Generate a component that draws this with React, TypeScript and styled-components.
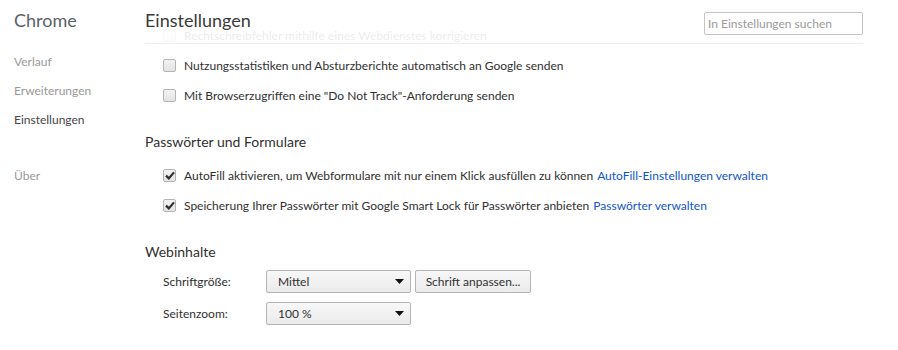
import React from 'react';
import styled, { createGlobalStyle } from 'styled-components';

const GlobalStyle = createGlobalStyle`
  body {
    margin: 0;
    background: #fff;
    font-family: Lato, "Open Sans", sans-serif;
    font-size: 12px;
    color: #303030;
  }
`;

const Page = styled.div`
  display: flex;
  width: 898px;
  height: 350px;
  overflow: hidden;
`;

const Sidebar = styled.nav`
  width: 145px;
  flex-shrink: 0;
  padding-left: 14px;
  box-sizing: border-box;
`;

const Brand = styled.h1`
  margin: 0;
  padding-top: 9px;
  font-size: 18px;
  line-height: 22px;
  font-weight: 400;
  color: #5c6166;
`;

const NavList = styled.ul`
  list-style: none;
  margin: 16px 0 0;
  padding: 0;
`;

const NavItem = styled.li<{ $active?: boolean; $gap?: boolean }>`
  height: 29px;
  line-height: 29px;
  margin-top: ${(p) => (p.$gap ? '27px' : '0')};
  color: ${(p) => (p.$active ? '#464646' : '#999')};
`;

const Main = styled.main`
  position: relative;
  width: 718px;
`;

/* fixed header lying over the scrolled settings list */
const Header = styled.header`
  position: absolute;
  top: 0;
  left: 0;
  right: 0;
  height: 44px;
  box-sizing: border-box;
  padding-top: 9px;
  display: flex;
  justify-content: space-between;
  align-items: flex-start;
  background: rgba(255, 255, 255, 0.9);
  border-bottom: 1px solid #eee;
`;

const Title = styled.h1`
  margin: 0;
  font-size: 18px;
  line-height: 22px;
  font-weight: 400;
  color: #3a3a3a;
`;

const Search = styled.input`
  margin-top: 3px;
  width: 159px;
  height: 23px;
  box-sizing: border-box;
  border: 1px solid #c4c4c4;
  border-radius: 2px;
  padding: 0 3px;
  font-family: inherit;
  font-size: 12px;
  color: #303030;
  outline: none;
  &::placeholder {
    color: #9a9a9a;
  }
`;

const Content = styled.div`
  padding-top: 20px;
`;

const Section = styled.section`
  margin-top: 22px;
`;

const SectionTitle = styled.h3`
  margin: 0 0 8px;
  font-size: 14px;
  line-height: 20px;
  font-weight: 400;
  color: #303030;
`;

const CheckRow = styled.label`
  display: flex;
  align-items: center;
  height: 30px;
  padding-left: 18px;
`;

const Box = styled.span`
  width: 13px;
  height: 13px;
  box-sizing: border-box;
  margin-right: 8px;
  flex-shrink: 0;
  border: 1px solid #b4b4b4;
  border-radius: 2px;
  background: linear-gradient(#f2f2f2, #e4e4e4);
  display: flex;
  align-items: center;
  justify-content: center;
`;

const Link = styled.a`
  color: #15c;
  text-decoration: none;
  margin-left: 4px;
`;

const FieldRow = styled.div`
  display: flex;
  align-items: center;
  padding-left: 18px;
  margin-bottom: 9px;
`;

const FieldLabel = styled.span`
  width: 103px;
`;

const Dropdown = styled.button`
  width: 145px;
  height: 23px;
  box-sizing: border-box;
  display: flex;
  align-items: center;
  justify-content: space-between;
  padding: 0 6px 0 11px;
  border: 1px solid #b4b4b4;
  border-radius: 2px;
  background: linear-gradient(#f7f7f7, #ebebeb);
  font-family: inherit;
  font-size: 12px;
  color: #303030;
`;

const PushButton = styled.button`
  margin-left: 4px;
  width: 116px;
  height: 23px;
  box-sizing: border-box;
  border: 1px solid #b4b4b4;
  border-radius: 2px;
  background: linear-gradient(#f7f7f7, #ebebeb);
  font-family: inherit;
  font-size: 12px;
  color: #303030;
`;

const Check = () => (
  <svg width="10" height="9" viewBox="0 0 10 9">
    <path d="M1 4.6 L3.8 7.4 L9 1.4" fill="none" stroke="#2e2e2e" strokeWidth="2.2" />
  </svg>
);

const Arrow = () => (
  <svg width="9" height="5" viewBox="0 0 9 5">
    <path d="M0 0 H9 L4.5 5 Z" fill="#111" />
  </svg>
);

const Checkbox = ({ checked, children }: { checked?: boolean; children: React.ReactNode }) => (
  <CheckRow>
    <Box>{checked && <Check />}</Box>
    <span>{children}</span>
  </CheckRow>
);

export default function App() {
  return (
    <Page>
      <GlobalStyle />
      <Sidebar>
        <Brand>Chrome</Brand>
        <NavList>
          <NavItem>Verlauf</NavItem>
          <NavItem>Erweiterungen</NavItem>
          <NavItem $active>Einstellungen</NavItem>
          <NavItem $gap>Über</NavItem>
        </NavList>
      </Sidebar>
      <Main>
        <Content>
          <Checkbox>Rechtschreibfehler mithilfe eines Webdienstes korrigieren</Checkbox>
          <Checkbox>Nutzungsstatistiken und Absturzberichte automatisch an Google senden</Checkbox>
          <Checkbox>Mit Browserzugriffen eine "Do Not Track"-Anforderung senden</Checkbox>
          <Section>
            <SectionTitle>Passwörter und Formulare</SectionTitle>
            <Checkbox checked>
              AutoFill aktivieren, um Webformulare mit nur einem Klick ausfüllen zu können
              <Link>AutoFill-Einstellungen verwalten</Link>
            </Checkbox>
            <Checkbox checked>
              Speicherung Ihrer Passwörter mit Google Smart Lock für Passwörter anbieten
              <Link>Passwörter verwalten</Link>
            </Checkbox>
          </Section>
          <Section>
            <SectionTitle>Webinhalte</SectionTitle>
            <FieldRow>
              <FieldLabel>Schriftgröße:</FieldLabel>
              <Dropdown>
                Mittel <Arrow />
              </Dropdown>
              <PushButton>Schrift anpassen...</PushButton>
            </FieldRow>
            <FieldRow>
              <FieldLabel>Seitenzoom:</FieldLabel>
              <Dropdown>
                100 % <Arrow />
              </Dropdown>
            </FieldRow>
          </Section>
        </Content>
        <Header>
          <Title>Einstellungen</Title>
          <Search placeholder="In Einstellungen suchen" />
        </Header>
      </Main>
    </Page>
  );
}
